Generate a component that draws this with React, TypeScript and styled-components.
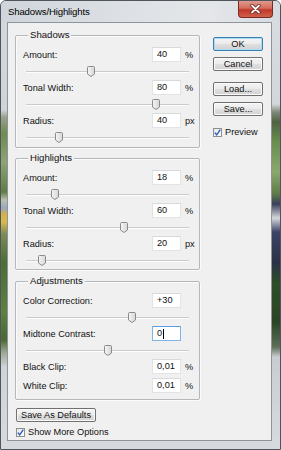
import React from "react";
import styled, { createGlobalStyle } from "styled-components";

const Global = createGlobalStyle`
  html, body { margin: 0; padding: 0; background: #fff; }
  body { font-family: "Liberation Sans", Arial, sans-serif; }
  * { box-sizing: border-box; }
`;

const Window = styled.div`
  width: 281px;
  height: 450px;
  display: flex;
  flex-direction: column;
  border: 1px solid #4f555c;
  border-radius: 6px 6px 0 0;
  overflow: hidden;
  background: #d9dde2;
`;

const TitleBar = styled.div`
  height: 21px;
  flex: none;
  display: flex;
  align-items: flex-start;
  justify-content: space-between;
  padding-left: 7px;
  background: linear-gradient(to right, #cfd5dc 0%, #dde1e5 45%, #e4e6e9 75%, #d6dbe0 100%);
`;

const Title = styled.span`
  font-size: 9.6px;
  line-height: 21px;
  color: #000;
  letter-spacing: -0.15px;
`;

const CloseButton = styled.div`
  width: 35px;
  height: 17px;
  margin-right: 7px;
  border: 1px solid #7a2a22;
  border-top: none;
  border-radius: 0 0 4px 4px;
  background: linear-gradient(#e09a8e 0%, #d56b5b 45%, #c0392b 55%, #d0604a 100%);
  display: flex;
  align-items: center;
  justify-content: center;
`;

const Body = styled.div`
  flex: 1;
  display: flex;
  min-height: 0;
`;

const FrameSide = styled.div<{ $side: "left" | "right" }>`
  flex: none;
  width: ${(p) => (p.$side === "left" ? "6px" : "8px")};
  background: ${(p) =>
    p.$side === "left"
      ? `linear-gradient(#d3d8dd 0px, #cfd4d8 88px, #9aa28c 95px, #6f8a4e 112px, #8ea474 140px, #5f7d42 170px, #b9c2b0 178px, #9aa7c0 186px, #d4b04a 192px, #d9b84e 200px, #7d8a55 212px, #4c6e34 240px, #5f7f42 290px, #4a6834 318px, #9aa58f 330px, #cfd4d8 345px, #d6dade 100%)`
      : `linear-gradient(#d8dce0 0px, #d3d7db 82px, #7f8a7a 90px, #4f6242 100px, #6a8d50 120px, #8aa86e 150px, #5d7a48 172px, #3a3f5a 182px, #d6d6dc 196px, #3c4466 210px, #2b3146 240px, #2f4d2a 262px, #2a4526 300px, #5e6e58 325px, #c9cdd1 335px, #d6dade 100%)`};
`;

const BottomFrame = styled.div`
  height: 8px;
  flex: none;
  background: #d6dade;
`;

const Panel = styled.div`
  flex: 1;
  background: #f0f0f0;
  border: 1px solid #8d949c;
  padding: 12px 0 0 7px;
  display: grid;
  grid-template-columns: 185px 50px;
  column-gap: 13px;
  align-items: start;
`;

const LeftCol = styled.div`
  display: flex;
  flex-direction: column;
`;

const RightCol = styled.div`
  display: flex;
  flex-direction: column;
  padding-top: 2px;
`;

const Group = styled.div<{ $mt?: number; $pb?: number }>`
  position: relative;
  border: 1px solid #b4b7bb;
  border-radius: 2px;
  box-shadow: inset 1px 1px 0 #fbfbfb, 1px 1px 0 #fbfbfb;
  padding: 11px 0 ${(p) => p.$pb ?? 1}px 0;
  margin-top: ${(p) => p.$mt ?? 0}px;
`;

const Legend = styled.span`
  position: absolute;
  top: -7px;
  left: 12px;
  padding: 0 2px;
  background: #f0f0f0;
  font-size: 9.6px;
  line-height: 12px;
  color: #111;
`;

const Row = styled.div<{ $mb?: number }>`
  height: 15px;
  display: grid;
  grid-template-columns: 1fr 29px 14px;
  column-gap: 4px;
  align-items: center;
  padding-left: 7px;
  margin-bottom: ${(p) => p.$mb ?? 0}px;
`;

const Label = styled.span`
  font-size: 9.2px;
  color: #111;
  white-space: nowrap;
`;

const Unit = styled.span`
  font-size: 9.2px;
  color: #111;
`;

const Field = styled.div<{ $focus?: boolean }>`
  height: 15px;
  background: #fff;
  border: 1px solid ${(p) => (p.$focus ? "#7eb4ea" : "#e2e3e4")};
  border-top-color: ${(p) => (p.$focus ? "#569de5" : "#d8d9da")};
  font-size: 9.2px;
  line-height: 13px;
  padding-left: 4px;
  color: #111;
  display: flex;
  align-items: center;
`;

const Caret = styled.span`
  display: inline-block;
  width: 1px;
  height: 10px;
  background: #000;
  margin-left: 0.5px;
`;

const SliderArea = styled.div`
  height: 18px;
  padding: 0 10px;
  display: flex;
  align-items: center;
`;

const Track = styled.div`
  position: relative;
  flex: 1;
  height: 2px;
  background: #c9cbcd;
  border-bottom: 1px solid #fdfdfd;
  margin-top: 1px;
`;

const Thumb = styled.svg`
  position: absolute;
  top: -5px;
  width: 8px;
  height: 11px;
  margin-left: -4px;
`;

const Button = styled.div<{ $primary?: boolean; $w?: number; $mt?: number }>`
  width: ${(p) => p.$w ?? 50}px;
  height: 14px;
  margin-top: ${(p) => p.$mt ?? 0}px;
  border: 1px solid ${(p) => (p.$primary ? "#3c7fb1" : "#707070")};
  border-radius: 2px;
  box-shadow: inset 0 0 0 1px ${(p) => (p.$primary ? "#a9dbf6" : "#fbfbfb")};
  background: linear-gradient(#f4f4f4 0%, #ececec 45%, #dedede 55%, #d2d2d2 100%);
  display: flex;
  align-items: center;
  justify-content: center;
  font-size: 9.2px;
  color: #111;
  white-space: nowrap;
`;

const CheckRow = styled.div<{ $mt?: number }>`
  display: flex;
  align-items: center;
  gap: 3px;
  margin-top: ${(p) => p.$mt ?? 0}px;
  font-size: 9.2px;
  line-height: 11px;
  color: #111;
`;

const Box = styled.div`
  width: 9px;
  height: 9px;
  border: 1px solid #8e8f8f;
  background: linear-gradient(135deg, #e6e6e6, #ffffff);
  display: flex;
  align-items: center;
  justify-content: center;
`;

const Footer = styled.div`
  display: flex;
  flex-direction: column;
  margin-top: 8px;
  margin-left: 1px;
`;

function Check() {
  return (
    <Box>
      <svg width="7" height="7" viewBox="0 0 7 7">
        <path d="M0.8 3.6 L2.7 5.8 L6.3 0.6" fill="none" stroke="#2c5fbd" strokeWidth="1.4" />
      </svg>
    </Box>
  );
}

function SliderThumb({ pct }: { pct: number }) {
  return (
    <Thumb viewBox="0 0 8 11" style={{ left: `${pct}%` }}>
      <defs>
        <linearGradient id="tg" x1="0" y1="0" x2="1" y2="0">
          <stop offset="0" stopColor="#f6f6f6" />
          <stop offset="1" stopColor="#d6d6d6" />
        </linearGradient>
      </defs>
      <path d="M1.5 0.5 H6.5 Q7.5 0.5 7.5 1.5 V8 L4 10.5 L0.5 8 V1.5 Q0.5 0.5 1.5 0.5 Z" fill="url(#tg)" stroke="#8a8a8a" />
    </Thumb>
  );
}

type P = { label: string; value: string; unit: string; pct: number; focus?: boolean };

function Param({ label, value, unit, pct, focus }: P) {
  return (
    <>
      <Row>
        <Label>{label}</Label>
        <Field $focus={focus}>
          {value}
          {focus && <Caret />}
        </Field>
        <Unit>{unit}</Unit>
      </Row>
      <SliderArea>
        <Track>
          <SliderThumb pct={pct} />
        </Track>
      </SliderArea>
    </>
  );
}

export default function App() {
  return (
    <>
      <Global />
      <Window>
        <TitleBar>
          <Title>Shadows/Highlights</Title>
          <CloseButton>
            <svg width="11" height="10" viewBox="0 0 11 10">
              <path d="M2 1.5 L9 8.5 M9 1.5 L2 8.5" stroke="#5a1a14" strokeWidth="3.2" strokeLinecap="round" />
              <path d="M2 1.5 L9 8.5 M9 1.5 L2 8.5" stroke="#ffffff" strokeWidth="1.8" strokeLinecap="round" />
            </svg>
          </CloseButton>
        </TitleBar>
        <Body>
          <FrameSide $side="left" />
          <Panel>
            <LeftCol>
              <Group>
                <Legend>Shadows</Legend>
                <Param label="Amount:" value="40" unit="%" pct={40} />
                <Param label="Tonal Width:" value="80" unit="%" pct={80} />
                <Param label="Radius:" value="40" unit="px" pct={20} />
              </Group>
              <Group $mt={10} $pb={0}>
                <Legend>Highlights</Legend>
                <Param label="Amount:" value="18" unit="%" pct={18} />
                <Param label="Tonal Width:" value="60" unit="%" pct={60} />
                <Param label="Radius:" value="20" unit="px" pct={10} />
              </Group>
              <Group $mt={11} $pb={6}>
                <Legend>Adjustments</Legend>
                <Param label="Color Correction:" value="+30" unit="" pct={65} />
                <Param label="Midtone Contrast:" value="0" unit="" pct={50} focus />
                <Row $mb={4}>
                  <Label>Black Clip:</Label>
                  <Field>0,01</Field>
                  <Unit>%</Unit>
                </Row>
                <Row>
                  <Label>White Clip:</Label>
                  <Field>0,01</Field>
                  <Unit>%</Unit>
                </Row>
              </Group>
              <Footer>
                <Button $w={80}>Save As Defaults</Button>
                <CheckRow $mt={5}>
                  <Check />
                  <span>Show More Options</span>
                </CheckRow>
              </Footer>
            </LeftCol>
            <RightCol>
              <Button $primary>OK</Button>
              <Button $mt={6}>Cancel</Button>
              <Button $mt={11}>Load...</Button>
              <Button $mt={6}>Save...</Button>
              <CheckRow $mt={11}>
                <Check />
                <span>Preview</span>
              </CheckRow>
            </RightCol>
          </Panel>
          <FrameSide $side="right" />
        </Body>
        <BottomFrame />
      </Window>
    </>
  );
}
